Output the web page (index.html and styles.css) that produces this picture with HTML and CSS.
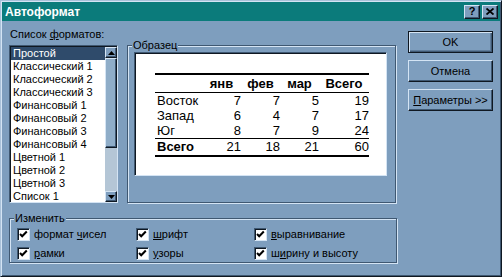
FILE: index.html
```html
<!DOCTYPE html>
<html lang="ru">
<head>
  <meta charset="UTF-8" />
  <title>Автоформат</title>
  <link rel="stylesheet" href="styles.css">
</head>
<body>

<div class="dialog">
  <div class="titlebar">
    <span class="title">Автоформат</span>
    <div class="title-btns">
      <span class="tbtn help">?</span>
      <span class="tbtn">
        <svg width="8" height="7" viewBox="0 0 8 7"><path d="M0.5 0.5 L7.5 6.5 M7.5 0.5 L0.5 6.5" stroke="#000" stroke-width="1.8"/></svg>
      </span>
    </div>
  </div>

  <div class="content">
    <div class="main-row">
      <div class="list-col">
        <div class="caption">Список <u>ф</u>орматов:</div>
        <div class="listbox">
          <ul class="items">
            <li class="selected">Простой</li>
            <li>Классический 1</li>
            <li>Классический 2</li>
            <li>Классический 3</li>
            <li>Финансовый 1</li>
            <li>Финансовый 2</li>
            <li>Финансовый 3</li>
            <li>Финансовый 4</li>
            <li>Цветной 1</li>
            <li>Цветной 2</li>
            <li>Цветной 3</li>
            <li>Список 1</li>
          </ul>
          <div class="scrollbar">
            <span class="sb-btn">
              <svg width="7" height="4" viewBox="0 0 7 4"><path d="M3.5 0 L7 4 L0 4 Z" fill="#000"/></svg>
            </span>
            <span class="sb-thumb"></span>
            <span class="sb-track"></span>
            <span class="sb-btn">
              <svg width="7" height="4" viewBox="0 0 7 4"><path d="M0 0 L7 0 L3.5 4 Z" fill="#000"/></svg>
            </span>
          </div>
        </div>
      </div>

      <div class="group sample-group">
        <span class="legend">Образец</span>
        <div class="sample">
          <table class="sample-table">
            <thead>
              <tr>
                <th class="label"></th>
                <th>янв</th>
                <th>фев</th>
                <th>мар</th>
                <th>Всего</th>
              </tr>
            </thead>
            <tbody>
              <tr><td class="label">Восток</td><td>7</td><td>7</td><td>5</td><td>19</td></tr>
              <tr><td class="label">Запад</td><td>6</td><td>4</td><td>7</td><td>17</td></tr>
              <tr><td class="label">Юг</td><td>8</td><td>7</td><td>9</td><td>24</td></tr>
              <tr class="total"><td class="label">Всего</td><td>21</td><td>18</td><td>21</td><td>60</td></tr>
            </tbody>
          </table>
        </div>
      </div>

      <div class="buttons">
        <button class="btn default">OK</button>
        <button class="btn">Отмена</button>
        <button class="btn"><u>П</u>араметры &gt;&gt;</button>
      </div>
    </div>

    <div class="group change-group">
      <span class="legend">Изменить</span>
      <div class="checks">
        <label class="check"><span class="box"></span><span>формат <u>ч</u>исел</span></label>
        <label class="check"><span class="box"></span><span><u>ш</u>рифт</span></label>
        <label class="check"><span class="box"></span><span><u>в</u>ыравнивание</span></label>
        <label class="check"><span class="box"></span><span><u>р</u>амки</span></label>
        <label class="check"><span class="box"></span><span><u>у</u>зоры</span></label>
        <label class="check"><span class="box"></span><span>ш<u>и</u>рину и высоту</span></label>
      </div>
    </div>
  </div>
</div>

</body>
</html>
```

FILE: styles.css
```css
* { box-sizing: border-box; }

body {
  margin: 0;
  background: #7e9ebe;
  font-family: "Liberation Sans", Arial, sans-serif;
  font-size: 11px;
  color: #000;
}

.dialog {
  width: 502px;
  height: 277px;
  background: #7e9ebe;
  border: 1px solid;
  border-color: #a9c1d9 #0f1822 #0f1822 #a9c1d9;
  box-shadow: inset 1px 1px #d4e4f4, inset -1px -1px #3f5872;
  padding: 1px;
}

.titlebar {
  height: 19px;
  background: #0b7b7b;
  display: flex;
  align-items: center;
  justify-content: space-between;
  padding: 0 2px 0 3px;
}

.title {
  color: #fff;
  font-weight: bold;
  font-size: 12px;
}

.title-btns {
  display: flex;
  gap: 2px;
}

.tbtn {
  width: 16px;
  height: 14px;
  background: #7e9ebe;
  border: 1px solid;
  border-color: #d4e4f4 #0f1822 #0f1822 #d4e4f4;
  box-shadow: inset -1px -1px #3f5872;
  display: flex;
  align-items: center;
  justify-content: center;
  font-weight: bold;
  font-size: 11px;
  line-height: 1;
}

.content {
  padding: 7px 0 0 7px;
}

.main-row {
  display: flex;
  align-items: flex-start;
}

.caption {
  line-height: 13px;
  margin-bottom: 4px;
  padding-left: 1px;
}

.listbox {
  width: 109px;
  height: 158px;
  background: #fff;
  border: 1px solid;
  border-color: #3f5872 #d4e4f4 #d4e4f4 #3f5872;
  box-shadow: inset 1px 1px #0f1822;
  padding: 1px 0 0 1px;
  display: flex;
  overflow: hidden;
}

.items {
  list-style: none;
  margin: 0;
  padding: 0;
  flex: 1;
}

.items li {
  height: 13px;
  line-height: 13px;
  padding-left: 2px;
  white-space: nowrap;
}

.items li.selected {
  background: #2f4b6b;
  color: #fff;
}

.scrollbar {
  width: 12px;
  display: flex;
  flex-direction: column;
  height: 155px;
}

.sb-btn {
  height: 11px;
  flex: none;
  background: #7e9ebe;
  border: 1px solid;
  border-color: #d4e4f4 #0f1822 #0f1822 #d4e4f4;
  box-shadow: inset -1px -1px #3f5872;
  display: flex;
  align-items: center;
  justify-content: center;
}

.sb-thumb {
  height: 90px;
  flex: none;
  background: #8fadc8;
  border: 1px solid;
  border-color: #d4e4f4 #0f1822 #0f1822 #d4e4f4;
  box-shadow: inset -1px -1px #3f5872;
}

.sb-track {
  flex: 1;
  background: #b4c6d6;
}

.group {
  position: relative;
  border: 1px solid #3f5872;
  box-shadow: inset 1px 1px #d4e4f4, 1px 1px #d4e4f4;
}

.legend {
  position: absolute;
  top: -7px;
  left: 4px;
  background: #7e9ebe;
  padding: 0 1px;
  line-height: 13px;
}

.sample-group {
  width: 269px;
  height: 158px;
  margin: 17px 0 0 9px;
  padding: 6px 0 0 6px;
}

.sample {
  width: 253px;
  height: 124px;
  background: #fff;
  border: 1px solid;
  border-color: #3f5872 #d4e4f4 #d4e4f4 #3f5872;
  box-shadow: inset 1px 1px #0f1822;
  padding: 20px 0 0 20px;
}

.sample-table {
  border-collapse: collapse;
  font-size: 13px;
  width: 214px;
  table-layout: fixed;
}

.sample-table th,
.sample-table td {
  padding: 0;
  text-align: right;
  line-height: 15px;
  white-space: nowrap;
}

.sample-table th {
  text-align: center;
  line-height: 17px;
  border-top: 2px solid #000;
  border-bottom: 1px solid #000;
}

.sample-table th:nth-child(1),
.sample-table td:nth-child(1) { width: 47px; }
.sample-table th:nth-child(2) { width: 39px; }
.sample-table th:nth-child(3) { width: 39px; }
.sample-table th:nth-child(4) { width: 39px; }
.sample-table th:nth-child(5) { width: 50px; }

.sample-table td.label {
  text-align: left;
  padding-left: 2px;
}

.sample-table tr.total td {
  border-top: 1px solid #000;
  border-bottom: 2px solid #000;
  line-height: 16px;
}

.sample-table tr.total td.label {
  font-weight: bold;
}

.buttons {
  display: flex;
  flex-direction: column;
  gap: 7px;
  width: 85px;
  margin: 3px 0 0 12px;
}

.btn {
  height: 22px;
  font-family: inherit;
  font-size: 11px;
  color: #000;
  background: #7e9ebe;
  border: 1px solid;
  border-color: #d4e4f4 #0f1822 #0f1822 #d4e4f4;
  box-shadow: inset -1px -1px #3f5872;
  padding: 0;
}

.btn.default {
  border: 1px solid #0f1822;
  box-shadow: inset 1px 1px #d4e4f4, inset -1px -1px #3f5872, inset -2px -2px #5f7c9a;
}

.change-group {
  width: 388px;
  height: 45px;
  margin-top: 15px;
  padding: 9px 0 0 7px;
}

.checks {
  display: grid;
  grid-template-columns: 119px 118px auto;
  row-gap: 6px;
}

.check {
  display: flex;
  align-items: center;
  gap: 4px;
  line-height: 13px;
  white-space: nowrap;
}

.box {
  width: 13px;
  height: 13px;
  flex: none;
  background: #fff url("data:image/svg+xml,%3Csvg xmlns='http://www.w3.org/2000/svg' width='13' height='13'%3E%3Cpath d='M3 6 L5.2 8.3 L9.8 3.5' fill='none' stroke='%23000' stroke-width='2'/%3E%3C/svg%3E") no-repeat center;
  border: 1px solid;
  border-color: #3f5872 #d4e4f4 #d4e4f4 #3f5872;
  box-shadow: inset 1px 1px #0f1822;
}
```
